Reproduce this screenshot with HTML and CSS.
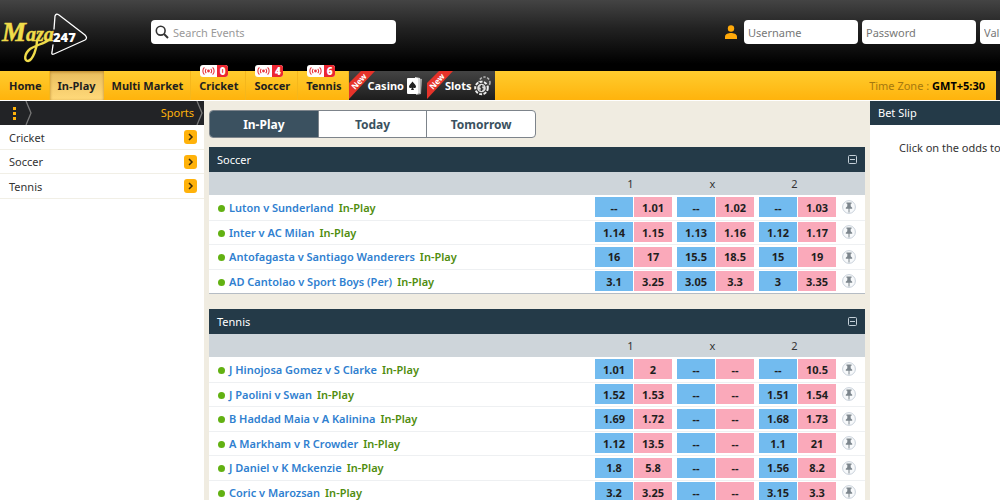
FILE: index.html
```html
<!DOCTYPE html>
<html lang="en">
<head>
<meta charset="UTF-8">
<meta name="viewport" content="width=device-width, initial-scale=1.0">
<title>Maza247</title>
<link rel="stylesheet" href="styles.css">
</head>
<body>
  <svg class="defs" width="0" height="0" aria-hidden="true">
    <symbol id="pin" viewBox="0 0 14 14">
      <circle cx="7" cy="7" r="6.4" fill="#f7f9fb" stroke="#c3ccd6" stroke-width="0.9"/>
      <path d="M4.4 2.4h5.2v1.3h-.9v2.6l1.5 1.5v1H7.5v3.6h-1V8.8H3.8v-1l1.5-1.5V3.7h-.9z" fill="#7c858c"/>
    </symbol>
    <symbol id="live" viewBox="0 0 17 12">
      <g fill="none" stroke="#e8363f" stroke-width="1.1">
        <path d="M6.3 3.8a3 3 0 0 0 0 4.4M10.7 3.8a3 3 0 0 1 0 4.4M4.4 2.4a5 5 0 0 0 0 7.2M12.6 2.4a5 5 0 0 1 0 7.2"/>
      </g>
      <circle cx="8.5" cy="6" r="1.4" fill="#e8363f"/>
    </symbol>
  </svg>

  <header class="header">
    <a class="logo" href="#" aria-label="Maza 247">
      <svg width="88" height="54" viewBox="0 0 88 54">
        <text x="2" y="31" class="logo-name"><tspan class="logo-initial">M</tspan>aza</text>
        <path d="M37 31c0 7-4 19-9 20-4 0-4-7 2-12 6-4 13-5 19-9" fill="none" stroke="#f0dc4a" stroke-width="2.4" stroke-linecap="round"/>
        <path d="M54 19l1-13q1-3 4-1l26 20q3 3 0 5L54 44q-3 1-2-2l1-7" fill="none" stroke="#fff" stroke-width="1.3" stroke-linecap="round"/>
        <text x="53" y="32" class="logo-number">247</text>
      </svg>
    </a>
    <label class="search">
      <svg width="14" height="14" viewBox="0 0 14 14"><circle cx="5.7" cy="5.7" r="4.4" fill="none" stroke="#333" stroke-width="1.6"/><path d="M9 9l4 4" stroke="#333" stroke-width="2"/></svg>
      <input type="text" placeholder="Search Events" aria-label="Search Events">
    </label>
    <form class="login">
      <svg width="12" height="14" viewBox="0 0 12 14"><circle cx="6" cy="3.5" r="3.2" fill="#ffa90a"/><path d="M0 14v-2.5C0 9 3.5 8 6 8s6 1 6 3.500V14z" fill="#ffa90a"/></svg>
      <input type="text" placeholder="Username" aria-label="Username">
      <input type="password" placeholder="Password" aria-label="Password">
      <input type="text" placeholder="Validation" aria-label="Validation">
    </form>
  </header>

  <nav class="nav">
    <a href="#">Home</a>
    <a href="#" class="active">In-Play</a>
    <a href="#">Multi Market</a>
    <a href="#">Cricket<span class="badge"><svg width="17" height="12"><use href="#live"/></svg><b>0</b></span></a>
    <a href="#">Soccer<span class="badge"><svg width="17" height="12"><use href="#live"/></svg><b>4</b></span></a>
    <a href="#">Tennis<span class="badge"><svg width="17" height="12"><use href="#live"/></svg><b>6</b></span></a>
    <a href="#" class="game">
      <svg class="ribbon" width="26" height="29" viewBox="0 0 26 29"><path d="M0 12L12 0h14L0 28z" fill="#e6332a"/><text x="6" y="19" transform="rotate(-47 6 19)">New</text></svg>
      Casino
      <svg width="16" height="18" viewBox="0 0 16 18"><path d="M9 1l6 1-1 15-5 1z" fill="#aaa"/><path d="M8 0l5 1v15l-5 1z" fill="#ddd"/><rect x="0" y="1" width="11" height="16" rx="1" fill="#fff"/><path d="M5.500 4.500c1 2 3.500 3 3.500 5 0 1.700-2 2-3 1l1 2.500H4l1-2.500c-1 1-3 .7-3-1 0-2 2.500-3 3.500-5z" fill="#222"/></svg>
    </a>
    <a href="#" class="game">
      <svg class="ribbon" width="26" height="29" viewBox="0 0 26 29"><path d="M0 12L12 0h14L0 28z" fill="#e6332a"/><text x="6" y="19" transform="rotate(-47 6 19)">New</text></svg>
      Slots
      <svg width="17" height="20" viewBox="0 0 17 20"><circle cx="10.500" cy="6.500" r="5.500" fill="#444" stroke="#bbb" stroke-width="1.500" stroke-dasharray="2.500 1.500"/><circle cx="7.500" cy="12" r="6.300" fill="#333" stroke="#eee" stroke-width="2" stroke-dasharray="3 1.500"/><circle cx="7.500" cy="12" r="4.300" fill="#ddd"/><path d="M9.500 10h-3q-1 1 0 2h2q1 1 0 2h-3M7.500 9v6" fill="none" stroke="#333"/></svg>
    </a>
    <span class="timezone">Time Zone : <b>GMT+5:30</b></span>
    <span class="nav-end"></span>
  </nav>

  <div class="page">
    <aside class="sidebar">
      <div class="path">
        <svg width="32" height="24" viewBox="0 0 32 24"><g fill="#ffb20a"><rect x="13" y="6" width="3" height="3"/><rect x="13" y="11" width="3" height="3"/><rect x="13" y="16" width="3" height="3"/></g><path d="M26 0l5 12-5 12" fill="none" stroke="#777" stroke-width="1.300"/></svg>
        <span>Sports</span>
        <svg width="8" height="24" viewBox="0 0 8 24"><path d="M1 0l5 12-5 12" fill="none" stroke="#777" stroke-width="1.300"/></svg>
      </div>
      <ul class="sports">
        <li><a href="#">Cricket<svg width="13" height="14" viewBox="0 0 13 14"><rect width="13" height="14" rx="3" fill="#ffb20a"/><path d="M5 4l3 3-3 3" fill="none" stroke="#3b2a08" stroke-width="1.500"/></svg></a></li>
        <li><a href="#">Soccer<svg width="13" height="14" viewBox="0 0 13 14"><rect width="13" height="14" rx="3" fill="#ffb20a"/><path d="M5 4l3 3-3 3" fill="none" stroke="#3b2a08" stroke-width="1.500"/></svg></a></li>
        <li><a href="#">Tennis<svg width="13" height="14" viewBox="0 0 13 14"><rect width="13" height="14" rx="3" fill="#ffb20a"/><path d="M5 4l3 3-3 3" fill="none" stroke="#3b2a08" stroke-width="1.500"/></svg></a></li>
      </ul>
    </aside>

    <main class="content">
      <div class="tabs">
        <button class="selected">In-Play</button>
        <button>Today</button>
        <button>Tomorrow</button>
      </div>
      <div id="markets"></div>
    </main>

    <aside class="betslip">
      <h2>Bet Slip</h2>
      <p>Click on the odds to</p>
    </aside>
  </div>

<script src="script.js"></script>
</body>
</html>
```
FILE: styles.css
```css
* {
  box-sizing: border-box;
}

body {
  margin: 0;
  height: 100vh;
  display: flex;
  flex-direction: column;
  overflow: hidden;
  background: #f0ece1;
  color: #333;
  font-family: Tahoma, "Noto Sans", sans-serif;
  font-size: 11px;
}

a {
  color: inherit;
  text-decoration: none;
}

button,
input {
  font: inherit;
}

svg {
  flex: none;
}

.defs {
  position: absolute;
}

/* header */
.header {
  flex: none;
  display: flex;
  align-items: flex-start;
  height: 71px;
  padding-top: 10px;
  background: linear-gradient(#444, #222 40%, #000 90%);
}

.logo {
  width: 151px;
}

.logo-name {
  fill: #f0dc4a;
  stroke: #f0dc4a;
  stroke-width: 0.5px;
  font: italic 700 20px "Liberation Serif", serif;
}

.logo-initial {
  font-size: 27px;
}

.logo-number {
  fill: #fff;
  font: 800 13px "Open Sans", sans-serif;
}

.search {
  display: flex;
  align-items: center;
  gap: 4px;
  width: 245px;
  height: 24px;
  margin-top: 10px;
  padding: 0 4px;
  background: #fff;
  border-radius: 4px;
}

.search input {
  flex: 1;
  min-width: 0;
  padding: 0;
  border: 0;
  outline: 0;
}

.search input::placeholder {
  color: #999;
}

.login {
  display: flex;
  align-items: center;
  gap: 4px;
  width: 275px;
  height: 24px;
  margin: 10px 0 0 auto;
  overflow: hidden;
}

.login svg {
  margin-right: 3px;
}

.login input {
  flex: none;
  width: 114px;
  height: 24px;
  padding: 0 4px;
  border: 0;
  border-radius: 4px;
}

.login input::placeholder {
  color: #777;
}

/* nav */
.nav {
  flex: none;
  display: flex;
  height: 29px;
  padding-left: 1px;
  background: linear-gradient(#ffcc2e, #ffb30c);
  color: #1e1e1e;
  line-height: 29px;
}

.nav a {
  position: relative;
  padding: 0 8px;
  box-shadow: inset -1px 0 #f5b71c;
  font-weight: 700;
}

.nav .active {
  background: linear-gradient(#e9bd5d, #ffd97a);
  box-shadow: inset 0 1px 3px #b8862b;
}

.badge {
  position: absolute;
  top: -6px;
  left: 9px;
  display: flex;
  height: 12px;
  overflow: hidden;
  background: #fff;
  border-radius: 3px;
  line-height: 12px;
}

.badge b {
  width: 11px;
  background: #ec2630;
  color: #fff;
  font-size: 10px;
  text-align: center;
}

.nav .game {
  display: flex;
  align-items: center;
  gap: 3px;
  padding: 0 4px 0 18px;
  background: linear-gradient(#444, #1d1d1d);
  box-shadow: none;
  color: #fff;
}

.ribbon {
  position: absolute;
  top: 0;
  left: 0;
}

.ribbon text {
  fill: #fff;
  font-size: 8px;
}

.timezone {
  margin-left: auto;
  color: #a5780f;
}

.timezone b {
  color: #000;
}

.nav-end {
  width: 4px;
  margin-left: 11px;
  background: #222;
}

/* columns */
.page {
  flex: 1;
  display: grid;
  grid-template-columns: 204px 1fr 130px;
  gap: 5px;
  min-height: 0;
  border-top: 1px solid #fff;
}

.sidebar {
  background: #fff;
}

.path {
  display: flex;
  height: 24px;
  background: #222326;
  color: #ffb20a;
  line-height: 24px;
}

.path span {
  margin-left: auto;
  padding-right: 2px;
}

.sports {
  margin: 0;
  padding: 0;
  list-style: none;
}

.sports a {
  display: flex;
  align-items: center;
  justify-content: space-between;
  height: 25px;
  padding: 0 7px 0 9px;
  border-bottom: 1px solid #f1efe6;
}

.sports li:nth-child(even) a {
  height: 24px;
}

.content {
  min-width: 0;
  padding-top: 9px;
}

.tabs {
  display: flex;
  width: 327px;
  height: 28px;
  margin-bottom: 9px;
  overflow: hidden;
  background: #fff;
  border: 1px solid #7d848b;
  border-radius: 4px;
}

.tabs button {
  flex: 1;
  padding: 0;
  border: 0;
  border-left: 1px solid #7d848b;
  background: none;
  color: #3b5160;
  font-size: 12px;
  font-weight: 700;
}

.tabs .selected {
  border: 0;
  background: #3b5160;
  color: #fff;
}

/* markets */
.market {
  margin-bottom: 15px;
  background: #fff;
  border-bottom: 1px solid #b5bcc4;
}

.market h2 {
  display: flex;
  align-items: center;
  justify-content: space-between;
  height: 25px;
  margin: 0;
  padding: 0 8px;
  background: #243a48;
  color: #fff;
  font-size: 11px;
  font-weight: 400;
}

.toggle {
  display: flex;
  padding: 0;
  border: 0;
  background: none;
}

.market table {
  width: 100%;
  border-collapse: collapse;
  table-layout: fixed;
}

.market th {
  width: 82px;
  height: 23px;
  padding: 0 5px 0 0;
  background: #ced5da;
  font-weight: 400;
}

.market .name {
  width: auto;
}

.market .pin {
  width: 27px;
}

.market td {
  height: 25px;
  padding: 0 2px 0 3px;
  border-bottom: 1px solid #eef0f2;
}

.market tr:nth-child(even) td {
  height: 24px;
}

.market tr:last-child td {
  border: 0;
}

.market .event {
  padding-left: 9px;
  white-space: nowrap;
}

.event::before {
  content: "";
  display: inline-block;
  width: 7px;
  height: 7px;
  margin-right: 4px;
  background: #62b112;
  border-radius: 50%;
}

.event a {
  margin-right: 5px;
  color: #2f80d0;
  font-weight: 600;
}

.event span {
  color: #508d0e;
  font-weight: 600;
}

.odds {
  display: flex;
  gap: 1px;
}

.odds button {
  flex: 1;
  height: 20px;
  padding: 0;
  border: 0;
  background: #72bbef;
  color: #1e1e1e;
  font-weight: 700;
}

.odds .lay {
  background: #faa9ba;
}

.pin-icon {
  display: block;
  margin-left: 1px;
}

/* bet slip */
.betslip {
  overflow: hidden;
  background: #fff;
  white-space: nowrap;
}

.betslip h2 {
  height: 24px;
  margin: 0;
  padding-left: 8px;
  background: #243a48;
  color: #fff;
  font-size: 11px;
  font-weight: 400;
  line-height: 24px;
}

.betslip p {
  margin: 15px 0 0 29px;
}
```
FILE: script.js
```js
const markets = [
  {
    name: 'Soccer',
    events: [
      ['Luton v Sunderland', '--', '1.01', '--', '1.02', '--', '1.03'],
      ['Inter v AC Milan', '1.14', '1.15', '1.13', '1.16', '1.12', '1.17'],
      ['Antofagasta v Santiago Wanderers', '16', '17', '15.5', '18.5', '15', '19'],
      ['AD Cantolao v Sport Boys (Per)', '3.1', '3.25', '3.05', '3.3', '3', '3.35']
    ]
  },
  {
    name: 'Tennis',
    events: [
      ['J Hinojosa Gomez v S Clarke', '1.01', '2', '--', '--', '--', '10.5'],
      ['J Paolini v Swan', '1.52', '1.53', '--', '--', '1.51', '1.54'],
      ['B Haddad Maia v A Kalinina', '1.69', '1.72', '--', '--', '1.68', '1.73'],
      ['A Markham v R Crowder', '1.12', '13.5', '--', '--', '1.1', '21'],
      ['J Daniel v K Mckenzie', '1.8', '5.8', '--', '--', '1.56', '8.2'],
      ['Coric v Marozsan', '3.2', '3.25', '--', '--', '3.15', '3.3']
    ]
  }
];

function oddsCell(back, lay) {
  return `<td><div class="odds"><button class="back">${back}</button><button class="lay">${lay}</button></div></td>`;
}

function eventRow([name, ...odds]) {
  return `<tr>
    <td class="event"><a href="#">${name}</a><span>In-Play</span></td>
    ${oddsCell(odds[0], odds[1])}${oddsCell(odds[2], odds[3])}${oddsCell(odds[4], odds[5])}
    <td><svg class="pin-icon" width="14" height="14"><use href="#pin"/></svg></td>
  </tr>`;
}

document.getElementById('markets').innerHTML = markets.map(market => `
  <section class="market">
    <h2>${market.name}
      <button class="toggle" aria-label="Collapse ${market.name}">
        <svg width="9" height="9" viewBox="0 0 9 9"><rect x="0.5" y="0.5" width="8" height="8" rx="1" fill="none" stroke="#c5d0d8"/><path d="M2 4.5h5" stroke="#c5d0d8"/></svg>
      </button>
    </h2>
    <table>
      <thead><tr><th class="name"></th><th>1</th><th>x</th><th>2</th><th class="pin"></th></tr></thead>
      <tbody>${market.events.map(eventRow).join('')}</tbody>
    </table>
  </section>`).join('');
```
